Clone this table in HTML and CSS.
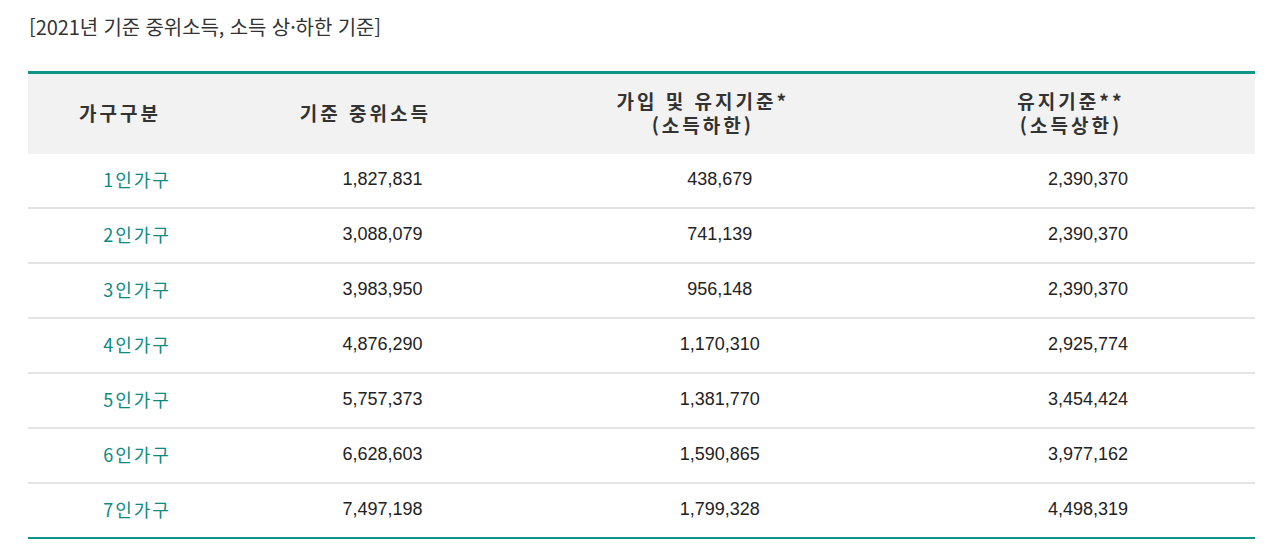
FILE: index.html
```html
<!DOCTYPE html>
<html lang="ko">
<head>
<meta charset="utf-8">
<link rel="stylesheet" href="styles.css">
</head>
<body>
<div class="wrap">
  <p class="caption">[2021년 기준 중위소득, 소득 상·하한 기준]</p>
  <table class="tbl">
    <colgroup>
      <col class="c1"><col class="c2"><col class="c3"><col class="c4">
    </colgroup>
    <thead>
      <tr>
        <th>가구구분</th>
        <th>기준 중위소득</th>
        <th>가입 및 유지기준*<br>(소득하한)</th>
        <th>유지기준**<br>(소득상한)</th>
      </tr>
    </thead>
    <tbody>
      <tr><td class="kind">1인가구</td><td>1,827,831</td><td>438,679</td><td>2,390,370</td></tr>
      <tr><td class="kind">2인가구</td><td>3,088,079</td><td>741,139</td><td>2,390,370</td></tr>
      <tr><td class="kind">3인가구</td><td>3,983,950</td><td>956,148</td><td>2,390,370</td></tr>
      <tr><td class="kind">4인가구</td><td>4,876,290</td><td>1,170,310</td><td>2,925,774</td></tr>
      <tr><td class="kind">5인가구</td><td>5,757,373</td><td>1,381,770</td><td>3,454,424</td></tr>
      <tr><td class="kind">6인가구</td><td>6,628,603</td><td>1,590,865</td><td>3,977,162</td></tr>
      <tr><td class="kind">7인가구</td><td>7,497,198</td><td>1,799,328</td><td>4,498,319</td></tr>
    </tbody>
  </table>
</div>
</body>
</html>
```

FILE: styles.css
```css
html, body {
  margin: 0;
  padding: 0;
  background: #fff;
}
body {
  font-family: "Noto Sans CJK KR", "Noto Sans", sans-serif;
  color: #333;
}
.wrap {
  padding: 14px 25px 0 28px;
  width: 1227px;
}
.caption {
  margin: 0 0 0 1px;
  font-size: 20px;
  line-height: 26px;
  letter-spacing: -0.1px;
  color: #333;
}
.tbl {
  margin-top: 31px;
  width: 1227px;
  border-collapse: collapse;
  table-layout: fixed;
  border-top: 3px solid #0f9488;
  border-bottom: 2px solid #0f9488;
}
.c1 { width: 15%; }
.c2 { width: 25%; }
.c3 { width: 30%; }
.c4 { width: 30%; }
.tbl th {
  background: #f2f2f2;
  height: 77px;
  padding: 0 0 3px;
  font-size: 19px;
  font-weight: 700;
  line-height: 24px;
  letter-spacing: 3px;
  color: #333;
  text-align: center;
  vertical-align: middle;
}
.tbl td {
  height: 50px;
  padding: 0 0 3px 34px;
  text-align: center;
  vertical-align: middle;
  font-family: "Liberation Sans", Arial, sans-serif;
  font-size: 18px;
  color: #222;
  border-top: 2px solid #e3e3e3;
}
.tbl tbody tr:first-child td {
  border-top: none;
}
.tbl td.kind {
  font-family: "Noto Sans CJK KR", "Noto Sans", sans-serif;
  color: #0b8a80;
  font-size: 18px;
  letter-spacing: 2px;
}
```
